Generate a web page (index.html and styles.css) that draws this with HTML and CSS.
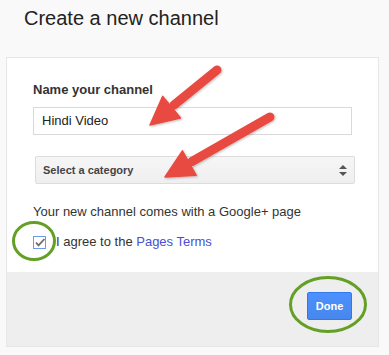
FILE: index.html
```html
<!DOCTYPE html>
<html>
<head>
<meta charset="utf-8">
<link rel="stylesheet" href="styles.css">
</head>
<body>
<h1 class="title">Create a new channel</h1>
<div class="card">
  <div class="card-body">
    <div class="label">Name your channel</div>
    <div class="input">Hindi Video</div>
    <div class="select">
      <span>Select a category</span>
      <svg class="select-arrows" width="8" height="11" viewBox="0 0 8 11"><path d="M0 4 L4 0 L8 4 Z M0 7 L4 11 L8 7 Z" fill="#555"/></svg>
    </div>
    <p class="note">Your new channel comes with a Google+ page</p>
    <div class="agree">
      <svg class="checkbox" width="14" height="14" viewBox="0 0 14 14">
        <rect x="0.5" y="0.5" width="12" height="12" fill="#fff" stroke="#6a9be8"/>
        <path d="M3 6.5 L5.5 9.3 L11.5 3" fill="none" stroke="#6b6b6b" stroke-width="1.8"/>
      </svg>
      <span>I agree to the <a class="link">Pages Terms</a></span>
    </div>
  </div>
  <div class="card-footer">
    <button class="done">Done</button>
  </div>
</div>
<svg class="annotations" width="389" height="355" viewBox="0 0 389 355">
  <defs>
    <filter id="sh" x="-20%" y="-20%" width="140%" height="140%">
      <feDropShadow dx="1" dy="1" stdDeviation="1" flood-color="#000" flood-opacity="0.25"/>
    </filter>
  </defs>
  <g fill="#e8493f" stroke="#e8493f" filter="url(#sh)">
    <line x1="217" y1="70" x2="174" y2="105" stroke-width="9" stroke-linecap="round"/>
    <polygon points="150,125 180.5,118 162.7,96.4" stroke-width="1.5" stroke-linejoin="round"/>
    <line x1="270" y1="117" x2="192" y2="161.5" stroke-width="9" stroke-linecap="round"/>
    <polygon points="165,177 196.2,175.3 182.4,150.9" stroke-width="1.5" stroke-linejoin="round"/>
  </g>
  <g fill="none" stroke="#64a026" stroke-width="3">
    <ellipse cx="34" cy="241" rx="20.5" ry="18.5"/>
    <ellipse cx="328" cy="304.5" rx="37.5" ry="27"/>
  </g>
</svg>
</body>
</html>
```
FILE: styles.css
```css
html, body {
  margin: 0;
  padding: 0;
}
body {
  background: #f9f9f9;
  font-family: "Liberation Sans", Arial, sans-serif;
  color: #333;
  width: 389px;
  height: 355px;
  position: relative;
  overflow: hidden;
}
.title {
  margin: 6px 0 0 24px;
  font-size: 20px;
  line-height: 24px;
  font-weight: normal;
  color: #222;
}
.card {
  margin: 27px 0 0 6px;
  width: 373px;
  border: 1px solid #e6e6e6;
  box-sizing: border-box;
  background: #fff;
}
.card-body {
  padding: 24px 26px 22px 26px;
}
.label {
  font-size: 13px;
  line-height: 16px;
  font-weight: bold;
  color: #333;
}
.input {
  margin-top: 9px;
  width: 319px;
  height: 28px;
  box-sizing: border-box;
  border: 1px solid #d9d9d9;
  padding-left: 8px;
  font-size: 13px;
  line-height: 26px;
  color: #222;
  background: #fff;
}
.select {
  margin: 21px 0 0 2px;
  width: 320px;
  height: 28px;
  box-sizing: border-box;
  border: 1px solid #dcdcdc;
  border-radius: 2px;
  background: linear-gradient(#f6f6f6, #efefef);
  display: flex;
  align-items: center;
  justify-content: space-between;
  padding: 0 7px 0 7px;
  font-size: 11px;
  font-weight: bold;
  color: #444;
}
.select-arrows {
  display: block;
}
.note {
  margin: 20px 0 0 0;
  font-size: 13px;
  line-height: 16px;
  color: #333;
}
.agree {
  margin-top: 14px;
  display: flex;
  align-items: center;
  gap: 9px;
  font-size: 13px;
  line-height: 16px;
  color: #333;
}
.checkbox {
  display: block;
  margin-top: 1px;
}
.link {
  color: #4650d6;
  text-decoration: none;
}
.card-footer {
  background: #eeeeee;
  height: 74px;
  padding: 20px 26px 0 0;
  box-sizing: border-box;
  display: flex;
  justify-content: flex-end;
  align-items: flex-start;
}
.done {
  width: 45px;
  height: 28px;
  border: 1px solid #3079ed;
  border-radius: 2px;
  background: linear-gradient(#4d90fe, #4787ed);
  color: #fff;
  font-family: "Liberation Sans", Arial, sans-serif;
  font-size: 11px;
  font-weight: bold;
  padding: 0;
}
.annotations {
  position: absolute;
  left: 0;
  top: 0;
  pointer-events: none;
}
```
